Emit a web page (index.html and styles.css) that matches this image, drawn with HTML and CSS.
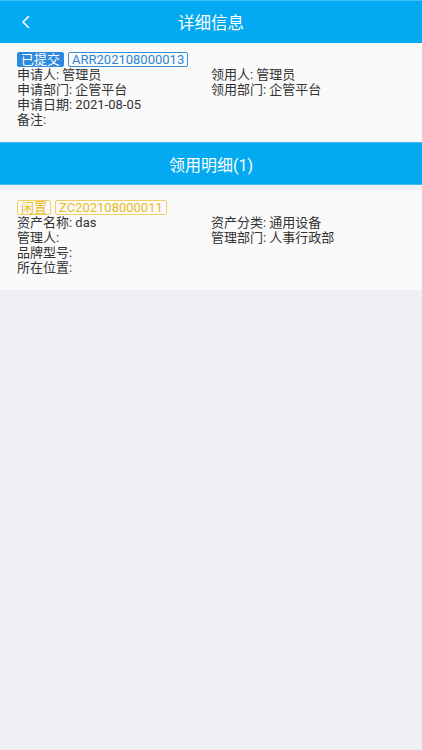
FILE: index.html
```html
<!DOCTYPE html>
<html lang="zh">
<head>
<meta charset="utf-8">
<title>详细信息</title>
<link rel="stylesheet" href="styles.css">
</head>
<body>
<div class="page">
  <header class="navbar">
    <span class="back">
      <svg width="12" height="14" viewBox="0 0 12 14"><path d="M8.5 1.5 L3 7 L8.5 12.5" fill="none" stroke="#fff" stroke-width="1.6" stroke-linecap="round" stroke-linejoin="round"/></svg>
    </span>
    <span class="title">详细信息</span>
  </header>

  <section class="card">
    <div class="tags">
      <span class="tag tag-blue-fill">已提交</span>
      <span class="tag tag-blue">ARR202108000013</span>
    </div>
    <div class="grid">
      <div>申请人: 管理员</div>
      <div>领用人: 管理员</div>
      <div>申请部门: 企管平台</div>
      <div>领用部门: 企管平台</div>
      <div class="full">申请日期: 2021-08-05</div>
      <div class="full">备注:</div>
    </div>
  </section>

  <div class="section-head">领用明细(1)</div>

  <section class="card card-item">
    <div class="tags">
      <span class="tag tag-yellow">闲置</span>
      <span class="tag tag-yellow">ZC202108000011</span>
    </div>
    <div class="grid">
      <div>资产名称: das</div>
      <div>资产分类: 通用设备</div>
      <div>管理人:</div>
      <div>管理部门: 人事行政部</div>
      <div class="full">品牌型号:</div>
      <div class="full">所在位置:</div>
    </div>
  </section>
</div>
</body>
</html>
```

FILE: styles.css
```css
html, body {
  margin: 0;
  padding: 0;
  background: #efeff4;
}
body {
  font-family: Roboto, "Noto Sans CJK SC", sans-serif;
  color: #333;
}
.page {
  width: 422px;
  min-height: 750px;
  background: #efeff4;
}
.navbar {
  height: 42px;
  background: #03a9f1;
  border-top: 1px solid #3fbdf4;
  display: flex;
  align-items: center;
  justify-content: center;
  position: relative;
}
.back {
  position: absolute;
  left: 20px;
  top: 14px;
  display: flex;
}
.title {
  color: #fff;
  font-size: 16.5px;
}
.card {
  background: #fafafb;
  padding: 9px 17px 14px 17px;
}
.card-item {
  margin-top: 5px;
  padding-top: 10px;
  padding-bottom: 15px;
}
.tags {
  display: flex;
  gap: 4px;
}
.tag {
  font-size: 13px;
  line-height: 13px;
  padding: 0 3px;
  border: 1px solid;
  border-radius: 2px;
}
.tag-blue-fill {
  background: #2d8ae0;
  border-color: #2d8ae0;
  color: #fff;
}
.tag-blue {
  border-color: #3a90da;
  color: #2d84d6;
}
.tag-yellow {
  border-color: #f0d060;
  color: #e8bc1c;
}
.grid {
  display: grid;
  grid-template-columns: 1fr 1fr;
  font-size: 13px;
  line-height: 15px;
}
.grid .full {
  grid-column: 1 / span 2;
}
.section-head {
  margin-top: 1px;
  height: 41px;
  background: #03a9f1;
  border-top: 1px solid #3fbdf4;
  border-bottom: 1px solid #3fbdf4;
  color: #fff;
  font-size: 16px;
  display: flex;
  align-items: center;
  justify-content: center;
  box-sizing: border-box;
  height: 43px;
}
```
